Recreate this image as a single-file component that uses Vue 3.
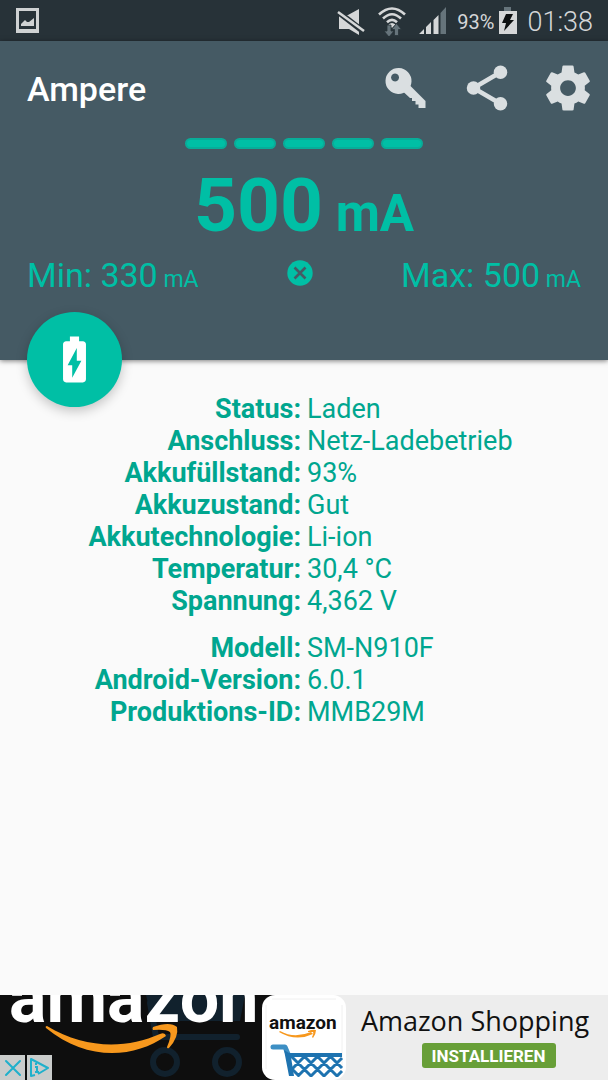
<script setup>
const groups = [
  [
    ['Status:', 'Laden'],
    ['Anschluss:', 'Netz-Ladebetrieb'],
    ['Akkufüllstand:', '93%'],
    ['Akkuzustand:', 'Gut'],
    ['Akkutechnologie:', 'Li-ion'],
    ['Temperatur:', '30,4 °C'],
    ['Spannung:', '4,362 V'],
  ],
  [
    ['Modell:', 'SM-N910F'],
    ['Android-Version:', '6.0.1'],
    ['Produktions-ID:', 'MMB29M'],
  ],
]
</script>

<template>
  <div class="screen">
    <div class="statusbar">
      <svg class="picture" width="23" height="25" viewBox="0 0 23 25" aria-hidden="true">
        <path fill="#cfd2d3" fill-rule="evenodd" d="M0 0h23v25H0zM3 3v18h17V3z" />
        <path fill="#cfd2d3" d="M5 18v-2l4-4 2 2h2l5-4v8z" />
      </svg>
      <div class="indicators">
        <svg width="28" height="30" viewBox="0 0 28 30" aria-hidden="true">
          <path fill="#d5d7d8" d="M2 9h9L22 3v26l-10-6H2z" />
          <path stroke="#273238" stroke-width="6" d="M0 5l27 21" />
          <path stroke="#d5d7d8" stroke-width="2.6" d="M1 6l26 19" />
        </svg>
        <svg width="28" height="30" viewBox="0 0 28 30" aria-hidden="true">
          <g fill="none" stroke="#d5d7d8" stroke-width="2.6">
            <path d="M1 8.500Q14-3.500 27 8.500" />
            <path d="M5 12.500Q14 4 23 12.500" />
            <path d="M9 16.200Q14 11.500 19 16.200" />
          </g>
          <path fill="#d5d7d8" d="M10.500 18.500Q14 15.500 17.500 18.500L14 22z" />
          <path fill="#66747b" stroke="#273238" stroke-width=".8" d="M9 19h4v6h3l-5 6-5-6h3zM16.500 29.500v-6h-3l5-6 5 6h-3v6z" />
        </svg>
        <svg width="28" height="28" viewBox="0 0 28 28" aria-hidden="true">
          <path fill="#d5d7d8" d="M0 27l5-5v5zM7 27v-7l5-5v12zM14.500 27V13l5-5v19z" />
          <path fill="#66747b" d="M21.500 27V6L27 0v27z" />
        </svg>
        <span class="percent">93%</span>
        <svg class="cell" width="18" height="28" viewBox="0 0 18 28" aria-hidden="true">
          <path fill="#66747b" d="M5 0h7v5H5z" />
          <path fill="#d5d7d8" d="M0 4h18v23H0z" />
          <path fill="#0d1011" d="M7 7h7l-3 6h4L5 24l2-8H3z" />
        </svg>
        <span class="clock">01:38</span>
      </div>
    </div>

    <header class="header">
      <div class="toolbar">
        <h1>Ampere</h1>
        <nav>
          <button type="button" aria-label="Pro-Version">
            <svg width="54" height="54" viewBox="0 0 54 54" aria-hidden="true">
              <path fill="#dadfe1" fill-rule="evenodd" d="M20 7a13 13 0 1 1-1 26a13 13 0 0 1 1-26zM16 12.500a4 4 0 1 0 .1 0z" />
              <path fill="#dadfe1" d="M24.500 31l6-7 16 16v7h-7v-3.500h-3V40H33v-3h-2z" />
            </svg>
          </button>
          <button type="button" aria-label="Teilen">
            <svg width="54" height="54" viewBox="0 0 24 24" aria-hidden="true">
              <g fill="#dadfe1"><circle cx="18" cy="5" r="3" /><circle cx="6" cy="12" r="3" /><circle cx="18" cy="19" r="3" /></g>
              <path fill="none" stroke="#dadfe1" stroke-width="2" d="M18 5L6 12l12 7" />
            </svg>
          </button>
          <button type="button" aria-label="Einstellungen">
            <svg width="54" height="54" viewBox="0 0 24 24" aria-hidden="true">
              <path fill="#dadfe1" d="M19.430 12.980c.04-.32.07-.64.07-.98s-.03-.66-.07-.98l2.110-1.650c.19-.15.24-.42.12-.64l-2-3.460c-.12-.22-.39-.3-.61-.22l-2.490 1c-.52-.4-1.080-.73-1.690-.98l-.38-2.650C14.460 2.180 14.250 2 14 2h-4c-.25 0-.46.18-.49.42l-.38 2.650c-.61.25-1.170.59-1.690.98l-2.490-1c-.23-.09-.49 0-.61.22l-2 3.460c-.13.22-.07.49.12.64l2.110 1.650c-.04.32-.07.65-.07.98s.03.66.07.98l-2.110 1.650c-.19.15-.24.42-.12.64l2 3.460c.12.22.39.3.61.22l2.490-1c.52.4 1.080.73 1.690.98l.38 2.650c.03.24.24.42.49.42h4c.25 0 .46-.18.49-.42l.38-2.650c.61-.25 1.170-.59 1.690-.98l2.490 1c.23.09.49 0 .61-.22l2-3.460c.12-.22.07-.49-.12-.64l-2.110-1.650zM12 15.500c-1.930 0-3.500-1.570-3.500-3.500s1.570-3.500 3.500-3.500 3.500 1.570 3.500 3.500-1.570 3.500-3.500 3.500z" />
            </svg>
          </button>
        </nav>
      </div>

      <div class="segments"><i v-for="n in 5" :key="n"></i></div>
      <p class="current">500<small> mA</small></p>
      <div class="range">
        <p>Min: 330<small> mA</small></p>
        <button type="button" class="reset" aria-label="Zurücksetzen">
          <svg width="26" height="26" viewBox="0 0 26 26" aria-hidden="true">
            <circle cx="13" cy="13" r="12.700" fill="#00bfa5" />
            <path stroke="#455a64" stroke-width="2.600" d="M7.500 7.500l11 11M18.500 7.500l-11 11" />
          </svg>
        </button>
        <p>Max: 500<small> mA</small></p>
      </div>

      <button type="button" class="fab" aria-label="Batterie">
        <svg width="55" height="55" viewBox="0 0 24 24" aria-hidden="true">
          <path fill="#fff" d="M15.670 4H14V2h-4v2H8.330C7.600 4 7 4.600 7 5.330v15.330C7 21.400 7.600 22 8.330 22h7.330c.74 0 1.340-.6 1.340-1.330V5.330C17 4.600 16.400 4 15.670 4zM11 20v-5.500H9L13 7v5.500h2L11 20z" />
        </svg>
      </button>
    </header>

    <main>
      <table>
        <tbody v-for="(group, i) in groups" :key="i">
          <tr v-for="row in group" :key="row[0]">
            <th scope="row">{{ row[0] }}</th>
            <td>{{ row[1] }}</td>
          </tr>
        </tbody>
      </table>
    </main>

    <aside class="ad">
      <div class="brand">
        <svg width="262" height="85" viewBox="0 0 262 85" aria-hidden="true">
          <g fill="none" stroke="#11212d">
            <path fill="#11212d" stroke="none" d="M146 0h99l-5 26h-88z" />
            <path stroke-width="6" stroke-linecap="round" d="M150 8l6 34h81" />
            <circle cx="165" cy="67" r="12" stroke-width="6" />
            <circle cx="227" cy="67" r="12" stroke-width="6" />
          </g>
          <text class="wordmark" x="9" y="27" font-size="70">amazon</text>
          <path fill="#f7981d" d="M47 31C85 54 126 54 160 39q5-2 6 2C133 64 86 66 46 33q-1-2 1-2zM153 32q17-6 24 0q2 10-8 21q-2 1-2-1q5-12 3-15q-4-3-17-2q-1-1 0-3z" />
        </svg>
        <div class="adtools">
          <button type="button" aria-label="Anzeige schließen">
            <svg width="25" height="25" viewBox="0 0 25 25" aria-hidden="true"><path stroke="#1fb0cb" stroke-width="2" stroke-linecap="round" d="M6 6l14 14M20 6L6 20" /></svg>
          </button>
          <button type="button" aria-label="Datenschutzinfo">
            <svg width="25" height="25" viewBox="0 0 25 25" aria-hidden="true">
              <path fill="none" stroke="#1fb0cb" stroke-width="2" stroke-linejoin="round" d="M8 20l-4 1V4l17 9-10 6" />
              <path fill="none" stroke="#1fb0cb" stroke-width="2" d="M8 12h2v5M8 17h4M9 8v2" />
            </svg>
          </button>
        </div>
      </div>
      <svg class="appicon" width="84" height="85" viewBox="0 0 84 85" aria-hidden="true">
        <rect width="84" height="85" rx="13" fill="#fff" />
        <path fill="none" stroke="#f0f0f0" d="M10 4h64M4 10v64M80 10v64" />
        <text class="wordmark dark" x="7" y="34" font-size="19">amazon</text>
        <path fill="#f7981d" d="M18 36q14 8 31 1l2 2q-17 8-34-2zM46 36q5-2 8-1q0 4-3 8l-1-1q2-4 1-5q-2 0-5 0z" />
        <path fill="none" stroke="#3d8fc4" stroke-width="5" stroke-linecap="round" stroke-linejoin="round" d="M11 52h12l3 7" />
        <path fill="#1e73b0" d="M22 55l5 3h53v4H29l3 19h-5z" />
        <path fill="none" stroke="#1e73b0" stroke-width="3" d="M29 61l20 20M41 60l21 21M54 60l21 21M67 60l13 13M29 76l-1 1M44 60L29 75M57 60L36 81M70 60L49 81M80 63L62 81M80 76l-5 5M30 74l7 7" />
      </svg>
      <div class="offer">
        <p>Amazon Shopping</p>
        <button type="button">INSTALLIEREN</button>
      </div>
    </aside>
  </div>
</template>

<style>
body {
  margin: 0;
}
</style>

<style scoped>
.screen {
  display: flex;
  flex-direction: column;
  min-height: 100vh;
  background: #fafafa;
  font-family: Roboto, "Liberation Sans", sans-serif;
}
p, h1 {
  margin: 0;
}
button {
  display: flex;
  align-items: center;
  justify-content: center;
  padding: 0;
  border: 0;
  background: none;
  font-family: inherit;
  cursor: pointer;
}
svg {
  display: block;
  flex: none;
}
small {
  line-height: 1;
}
.statusbar {
  display: flex;
  align-items: center;
  justify-content: space-between;
  height: 41px;
  padding: 0 15px 0 16px;
  background: #273238;
  color: #d5d7d8;
}
.indicators {
  display: flex;
  align-items: center;
}
.indicators svg + svg {
  margin-left: 13px;
}
.percent {
  margin: 2px 5px 0 10px;
  font-size: 20px;
}
.clock {
  margin: 2px 0 0 10px;
  font-size: 27px;
  font-weight: 300;
}
.header {
  position: relative;
  padding-bottom: 65px;
  background: #455a64;
  color: #00bfa5;
  box-shadow: 0 1px 5px rgba(0, 0, 0, 0.5);
}
.toolbar {
  display: flex;
  align-items: center;
  justify-content: space-between;
  height: 94px;
  padding-left: 27px;
}
.toolbar h1 {
  padding-top: 2px;
  color: #fff;
  font-size: 34px;
  font-weight: 500;
}
nav {
  display: flex;
}
nav button {
  width: 81px;
  height: 94px;
}
.segments {
  display: flex;
  justify-content: center;
  gap: 7px;
  padding-top: 3px;
}
.segments i {
  width: 42px;
  height: 11px;
  box-sizing: border-box;
  border: 2px solid #08ad99;
  border-radius: 6px;
  background: #00bfa5;
}
.current {
  margin-top: 16px;
  text-align: center;
  font-size: 75px;
  font-weight: 700;
  line-height: 80px;
}
.current small {
  font-size: 51px;
}
.range {
  display: flex;
  align-items: center;
  justify-content: space-between;
  padding: 10px 27px 0;
  font-size: 34px;
  line-height: 40px;
}
.range small {
  font-size: 23px;
}
.reset {
  padding-bottom: 4px;
}
.fab {
  position: absolute;
  bottom: -47px;
  left: 27px;
  width: 95px;
  height: 95px;
  border-radius: 50%;
  background: #00bfa5;
  box-shadow: 0 4px 12px rgba(0, 0, 0, 0.22);
}
main {
  flex: 1;
  padding: 33px 6px 0 0;
}
table {
  width: 100%;
  border-collapse: collapse;
  table-layout: fixed;
  color: #00a68f;
  font-size: 27px;
  line-height: 32px;
}
tbody + tbody::before {
  content: "";
  display: block;
  height: 15px;
}
th {
  width: 50%;
  padding: 0 6px 0 0;
  text-align: right;
  font-weight: 700;
}
td {
  padding: 0;
}
.ad {
  display: flex;
  height: 85px;
  background: linear-gradient(90deg, #0e0e0e 50%, #ededed 50%);
}
.brand {
  position: relative;
}
.wordmark {
  fill: #fff;
  font-family: Roboto, "Liberation Sans", sans-serif;
  font-weight: 700;
}
.dark {
  fill: #111;
}
.adtools {
  position: absolute;
  bottom: 0;
  left: 0;
  display: flex;
  gap: 2px;
}
.adtools button {
  background: #c9cccb;
}
.offer {
  flex: 1;
  display: flex;
  flex-direction: column;
  align-items: center;
  padding: 8px 4px 0 0;
  background: #ededed;
  color: #111;
}
.offer p {
  font-family: "Open Sans", "Noto Sans", sans-serif;
  font-size: 27px;
  line-height: 36px;
}
.offer button {
  width: 134px;
  height: 25px;
  margin: 4px 0 0 27px;
  border-radius: 3px;
  background: #689f38;
  color: #fff;
  font-size: 17px;
  font-weight: 700;
}
</style>
